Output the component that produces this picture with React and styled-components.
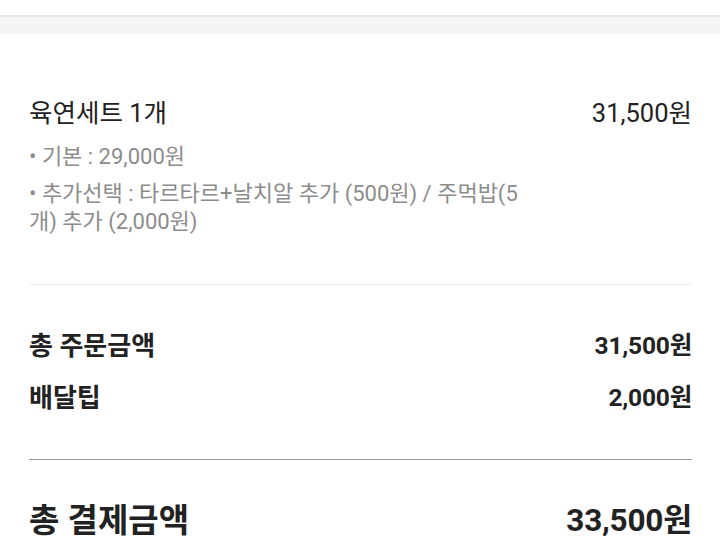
import React from "react";
import styled, { createGlobalStyle } from "styled-components";

const GlobalStyle = createGlobalStyle`
  body {
    margin: 0;
    background: #fff;
    font-family: Roboto, "Noto Sans CJK KR", sans-serif;
    color: #222;
  }
`;

const TopStrip = styled.div`
  height: 15px;
  background: #fff;
  border-bottom: 2px solid #e6e6e6;
`;

const GrayBand = styled.div`
  height: 17px;
  background: #f5f5f5;
`;

const Content = styled.div`
  padding: 0 28px 0 29px;
`;

const ItemSection = styled.section`
  padding: 63px 0 48px;
  border-bottom: 1px solid #f0f0f0;
`;

const ItemHead = styled.div`
  display: flex;
  justify-content: space-between;
  align-items: center;
`;

const ItemName = styled.div`
  font-size: 25.5px;
  line-height: 32px;
  color: #222;
`;

const ItemPrice = styled.div`
  font-size: 25.5px;
  line-height: 32px;
  color: #222;
`;

const OptionList = styled.ul`
  list-style: none;
  margin: 14px 0 0;
  padding: 0;
  max-width: 512px;
  display: flex;
  flex-direction: column;
  gap: 9px;
`;

const Option = styled.li`
  font-size: 22px;
  line-height: 28px;
  color: #8c8c8c;
  word-break: break-all;
`;

const SummarySection = styled.section`
  padding: 45px 0 45px;
  border-bottom: 1px solid #999;
  display: flex;
  flex-direction: column;
  gap: 20px;
`;

const Row = styled.div`
  display: flex;
  justify-content: space-between;
  align-items: center;
  font-weight: 700;
  line-height: ${(p) => (p.$big ? "40px" : "32px")};
  color: #222;
`;

const Label = styled.span`
  font-size: ${(p) => (p.$big ? "33px" : "26px")};
`;

const Amount = styled.span`
  font-size: ${(p) => (p.$big ? "31.5px" : "24.5px")};
  letter-spacing: -0.2px;
`;

const TotalSection = styled.section`
  padding-top: 41px;
`;

export default function App() {
  return (
    <>
      <GlobalStyle />
      <TopStrip />
      <GrayBand />
      <Content>
        <ItemSection>
          <ItemHead>
            <ItemName>육연세트 1개</ItemName>
            <ItemPrice>31,500원</ItemPrice>
          </ItemHead>
          <OptionList>
            <Option>• 기본 : 29,000원</Option>
            <Option>
              • 추가선택 : 타르타르+날치알 추가 (500원) / 주먹밥(5개) 추가 (2,000원)
            </Option>
          </OptionList>
        </ItemSection>
        <SummarySection>
          <Row>
            <Label>총 주문금액</Label>
            <Amount>31,500원</Amount>
          </Row>
          <Row>
            <Label>배달팁</Label>
            <Amount>2,000원</Amount>
          </Row>
        </SummarySection>
        <TotalSection>
          <Row $big>
            <Label $big>총 결제금액</Label>
            <Amount $big>33,500원</Amount>
          </Row>
        </TotalSection>
      </Content>
    </>
  );
}
